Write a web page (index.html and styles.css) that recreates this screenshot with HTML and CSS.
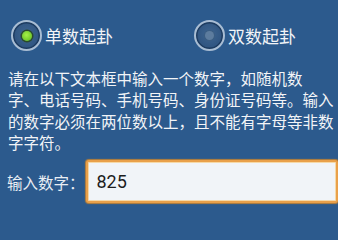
FILE: index.html
```
<!DOCTYPE html>
<html lang="zh">
<head>
<meta charset="utf-8">
<link rel="stylesheet" href="styles.css">
</head>
<body>
<div class="screen">
  <div class="radios">
    <label class="radio radio-one">
      <span class="ring checked"><span class="dot"></span></span>
      <span class="radio-text">单数起卦</span>
    </label>
    <label class="radio radio-two">
      <span class="ring"><span class="dot"></span></span>
      <span class="radio-text">双数起卦</span>
    </label>
  </div>
  <p class="desc"><span class="line">请在以下文本框中输入一个数字，如随机数</span><br><span class="line">字、电话号码、手机号码、身份证号码等。输入</span><br><span class="line">的数字必须在两位数以上，且不能有字母等非数</span><br><span class="line">字字符。</span></p>
  <div class="input-row">
    <span class="input-label">输入数字：</span>
    <div class="input-box">825</div>
  </div>
</div>
</body>
</html>
```
FILE: styles.css
```
html, body {
  margin: 0;
  padding: 0;
  background: #2c5a8d;
}
.screen {
  width: 338px;
  height: 211px;
  overflow: hidden;
  background: #2c5a8d;
  font-family: "Noto Sans CJK SC", "Noto Sans", sans-serif;
  color: #f2f4f7;
}
.radios {
  display: flex;
  padding: 20px 0 0 11px;
  height: 31px;
}
.radio {
  display: flex;
  align-items: center;
  gap: 3px;
}
.radio-two {
  margin-left: 81px;
}
.ring {
  width: 27px;
  height: 27px;
  border-radius: 50%;
  border: 2px solid #a9bdd3;
  background: radial-gradient(circle at 50% 45%, #3f6590 0%, #2f5480 70%, #294b74 100%);
  box-shadow: inset 0 0 0 1.5px #1e3c60;
  display: flex;
  align-items: center;
  justify-content: center;
}
.dot {
  width: 9px;
  height: 9px;
  border-radius: 50%;
  background: #5d7c9e;
  box-shadow: 0 0 0 1px #3b5d82;
}
.checked .dot {
  width: 10px;
  height: 10px;
  background: radial-gradient(circle at 45% 40%, #a6f04a 0%, #78d02a 60%, #5aa81e 100%);
  box-shadow: 0 0 0 1.5px #2b4b2a;
}
.radio-text {
  font-size: 17px;
  line-height: 31px;
}
.desc {
  margin: 17px 0 0 8px;
  font-size: 15.5px;
  line-height: 21.3px;
}
.line {
  white-space: nowrap;
}
.input-row {
  display: flex;
  align-items: center;
  margin-top: 7px;
  padding-left: 7px;
}
.input-label {
  font-size: 15.5px;
  width: 79px;
  color: #e9eef4;
}
.input-box {
  width: 241px;
  height: 39px;
  border: 2px solid #e9a04a;
  border-radius: 3px;
  background: #f1f4f8;
  box-shadow: inset 0 0 0 1px #f6d9a8, 0 0 1px 1px #b9803a;
  color: #1d1d1d;
  font-family: Roboto, "Noto Sans", sans-serif;
  font-size: 18px;
  line-height: 39px;
  padding-left: 9px;
  box-sizing: content-box;
}
```
